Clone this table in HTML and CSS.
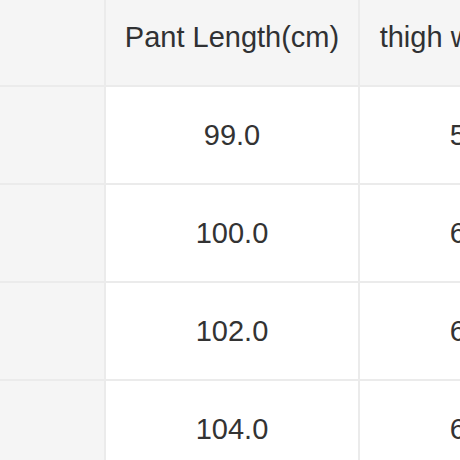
FILE: index.html
```html
<!DOCTYPE html>
<html>
<head>
<meta charset="utf-8">
<link rel="stylesheet" href="styles.css">
</head>
<body>
<div class="wrap">
<table class="size-table">
  <colgroup>
    <col class="c1"><col class="c2"><col class="c3">
  </colgroup>
  <thead>
    <tr><th class="lead"></th><th>Pant Length(cm)</th><th>thigh width(cm)</th></tr>
  </thead>
  <tbody>
    <tr><td class="lead">S</td><td>99.0</td><td>58.0</td></tr>
    <tr><td class="lead">M</td><td>100.0</td><td>60.0</td></tr>
    <tr><td class="lead">L</td><td>102.0</td><td>62.0</td></tr>
    <tr><td class="lead">XL</td><td>104.0</td><td>64.0</td></tr>
  </tbody>
</table>
</div>
</body>
</html>
```
FILE: styles.css
```css
html, body {
  margin: 0;
  padding: 0;
  background: #ffffff;
  overflow: hidden;
}
.wrap {
  width: 460px;
  height: 460px;
  overflow: hidden;
}
.size-table {
  border-collapse: separate;
  border-spacing: 0;
  table-layout: fixed;
  width: 598px;
  font-family: "Liberation Sans", Arial, sans-serif;
  font-size: 29px;
}
.c1 { width: 106px; }
.c2 { width: 254px; }
.c3 { width: 238px; }
.size-table th,
.size-table td {
  box-sizing: border-box;
  border-right: 2px solid #ebebeb;
  border-bottom: 2px solid #ebebeb;
  text-align: center;
  vertical-align: middle;
  white-space: nowrap;
  padding: 0;
  overflow: hidden;
}
.size-table th {
  height: 87px;
  padding-bottom: 10px;
  font-weight: normal;
  color: #303133;
  background: #f5f5f5;
}
.size-table td {
  height: 98px;
  color: #333333;
  background: #ffffff;
}
.size-table .lead {
  background: #f5f5f5;
  color: #f5f5f5;
}
```
